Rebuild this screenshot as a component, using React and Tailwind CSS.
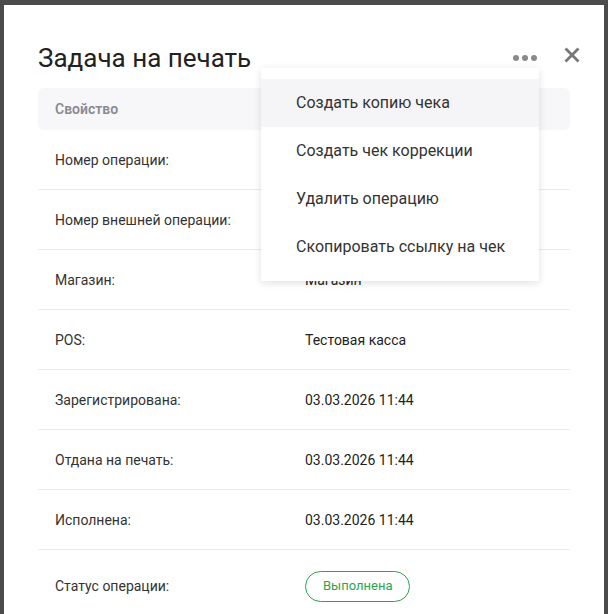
export default function App() {
  const rows = [
    ["Номер операции:", ""],
    ["Номер внешней операции:", ""],
    ["Магазин:", "Магазин"],
    ["POS:", "Тестовая касса"],
    ["Зарегистрирована:", "03.03.2026 11:44"],
    ["Отдана на печать:", "03.03.2026 11:44"],
    ["Исполнена:", "03.03.2026 11:44"],
  ];
  const menu = [
    "Создать копию чека",
    "Создать чек коррекции",
    "Удалить операцию",
    "Скопировать ссылку на чек",
  ];
  return (
    <div
      className="w-[608px] h-[614px] bg-[#4b4b4b] overflow-hidden pt-[5px] pl-[4px]"
      style={{ fontFamily: "Roboto, 'Liberation Sans', sans-serif" }}
    >
      <div className="relative w-[600px] h-[609px] bg-white px-[34px] pt-[37px]">
        <div className="flex items-center justify-between h-[32px]">
          <h1 className="text-[26px] leading-[32px] text-[#222] font-normal">Задача на печать</h1>
          <div className="flex items-center gap-[27px] -mr-[10px]">
            <div className="flex gap-[3px]">
              <span className="w-[6px] h-[6px] rounded-full bg-[#8a8a8a]" />
              <span className="w-[6px] h-[6px] rounded-full bg-[#8a8a8a]" />
              <span className="w-[6px] h-[6px] rounded-full bg-[#8a8a8a]" />
            </div>
            <svg className="-mt-[6px]" width="16" height="16" viewBox="0 0 16 16">
              <path d="M1.5 1.5 L14.5 14.5 M14.5 1.5 L1.5 14.5" stroke="#777" strokeWidth="2.8" />
            </svg>
          </div>
        </div>

        <div className="mt-[14px]">
          <div className="h-[42px] bg-[#f7f7f9] rounded-[6px] px-[17px] pt-[1px] flex items-center text-[14px] font-semibold text-[#8a8a90]">
            Свойство
          </div>
          {rows.map(([l, v], i) => (
            <div key={i} className="h-[60px] border-b border-[#ebebeb] flex items-center px-[17px] pt-[2px] text-[14px] text-[#333]">
              <div className="w-[250px]">{l}</div>
              <div className="text-[#222]">{v}</div>
            </div>
          ))}
          <div className="h-[72px] flex items-center px-[17px] text-[14px] text-[#333]">
            <div className="w-[250px]">Статус операции:</div>
            <div className="h-[31px] px-[17px] rounded-full border border-[#27a550] text-[#27a550] text-[13px] flex items-center">
              Выполнена
            </div>
          </div>
        </div>

        {/* dropdown menu */}
        <div className="absolute left-[257px] top-[63px] w-[278px] bg-white pt-[11px] pb-[10px] shadow-[0_2px_8px_rgba(0,0,0,0.12)]">
          {menu.map((m, i) => (
            <div
              key={i}
              className={`h-[48px] flex items-center pl-[35px] text-[16px] text-[#333] ${i === 0 ? "bg-[#f5f5f7]" : ""}`}
            >
              {m}
            </div>
          ))}
        </div>
      </div>
    </div>
  );
}
